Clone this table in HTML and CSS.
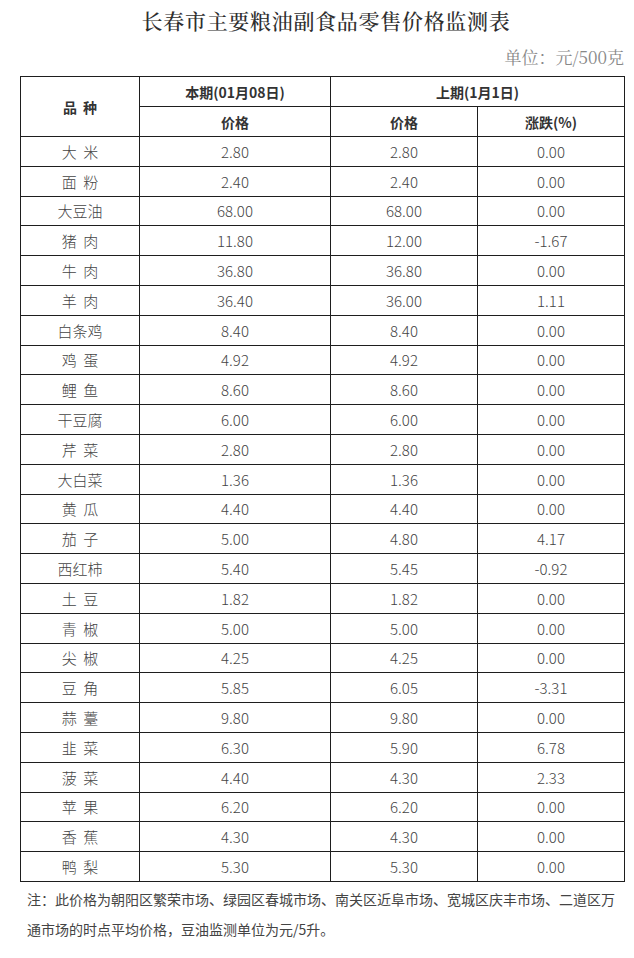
FILE: index.html
```html
<!DOCTYPE html>
<html lang="zh-CN">
<head>
<meta charset="utf-8">
<title>长春市主要粮油副食品零售价格监测表</title>
<link rel="stylesheet" href="styles.css">
</head>
<body>
<div class="page">
  <h1 class="title">长春市主要粮油副食品零售价格监测表</h1>
  <div class="unit">单位：元/500克</div>
  <table class="prices">
    <colgroup>
      <col class="c1"><col class="c2"><col class="c3"><col class="c4">
    </colgroup>
    <thead>
      <tr>
        <th rowspan="2" class="name">品 种</th>
        <th>本期(01月08日)</th>
        <th colspan="2">上期(1月1日)</th>
      </tr>
      <tr>
        <th>价格</th>
        <th>价格</th>
        <th>涨跌(%)</th>
      </tr>
    </thead>
    <tbody>
      <tr><td class="name">大 米</td><td>2.80</td><td>2.80</td><td>0.00</td></tr>
      <tr><td class="name">面 粉</td><td>2.40</td><td>2.40</td><td>0.00</td></tr>
      <tr><td class="name">大豆油</td><td>68.00</td><td>68.00</td><td>0.00</td></tr>
      <tr><td class="name">猪 肉</td><td>11.80</td><td>12.00</td><td>-1.67</td></tr>
      <tr><td class="name">牛 肉</td><td>36.80</td><td>36.80</td><td>0.00</td></tr>
      <tr><td class="name">羊 肉</td><td>36.40</td><td>36.00</td><td>1.11</td></tr>
      <tr><td class="name">白条鸡</td><td>8.40</td><td>8.40</td><td>0.00</td></tr>
      <tr><td class="name">鸡 蛋</td><td>4.92</td><td>4.92</td><td>0.00</td></tr>
      <tr><td class="name">鲤 鱼</td><td>8.60</td><td>8.60</td><td>0.00</td></tr>
      <tr><td class="name">干豆腐</td><td>6.00</td><td>6.00</td><td>0.00</td></tr>
      <tr><td class="name">芹 菜</td><td>2.80</td><td>2.80</td><td>0.00</td></tr>
      <tr><td class="name">大白菜</td><td>1.36</td><td>1.36</td><td>0.00</td></tr>
      <tr><td class="name">黄 瓜</td><td>4.40</td><td>4.40</td><td>0.00</td></tr>
      <tr><td class="name">茄 子</td><td>5.00</td><td>4.80</td><td>4.17</td></tr>
      <tr><td class="name">西红柿</td><td>5.40</td><td>5.45</td><td>-0.92</td></tr>
      <tr><td class="name">土 豆</td><td>1.82</td><td>1.82</td><td>0.00</td></tr>
      <tr><td class="name">青 椒</td><td>5.00</td><td>5.00</td><td>0.00</td></tr>
      <tr><td class="name">尖 椒</td><td>4.25</td><td>4.25</td><td>0.00</td></tr>
      <tr><td class="name">豆 角</td><td>5.85</td><td>6.05</td><td>-3.31</td></tr>
      <tr><td class="name">蒜 薹</td><td>9.80</td><td>9.80</td><td>0.00</td></tr>
      <tr><td class="name">韭 菜</td><td>6.30</td><td>5.90</td><td>6.78</td></tr>
      <tr><td class="name">菠 菜</td><td>4.40</td><td>4.30</td><td>2.33</td></tr>
      <tr><td class="name">苹 果</td><td>6.20</td><td>6.20</td><td>0.00</td></tr>
      <tr><td class="name">香 蕉</td><td>4.30</td><td>4.30</td><td>0.00</td></tr>
      <tr><td class="name">鸭 梨</td><td>5.30</td><td>5.30</td><td>0.00</td></tr>
    </tbody>
  </table>
  <p class="note">注：此价格为朝阳区繁荣市场、绿园区春城市场、南关区近阜市场、宽城区庆丰市场、二道区万通市场的时点平均价格，豆油监测单位为元/5升。</p>
</div>
</body>
</html>
```

FILE: styles.css
```css
html, body {
  margin: 0;
  padding: 0;
  background: #ffffff;
}

body {
  font-family: "Noto Sans CJK SC", "Noto Sans", sans-serif;
  color: #444;
}

.page {
  padding: 0 10px 0 20px;
}

.title {
  margin: 0;
  padding: 6px 0 0 0;
  text-align: center;
  font-family: "Noto Serif CJK SC", "Liberation Serif", "Noto Sans CJK SC", serif;
  font-weight: 500;
  font-size: 21px;
  line-height: 28px;
  letter-spacing: 0.7px;
  color: #2e2e2e;
  position: relative;
  left: 4px;
}

.unit {
  margin-top: 11px;
  text-align: right;
  font-family: "Noto Serif CJK SC", "Liberation Serif", "Noto Sans CJK SC", serif;
  font-size: 17px;
  line-height: 24px;
  color: #888;
}

.prices {
  margin-top: 7px;
  width: 605px;
  border-collapse: collapse;
  table-layout: fixed;
}

.c1 { width: 119px; }
.c2 { width: 191px; }
.c3 { width: 147px; }
.c4 { width: 147px; }

.prices th,
.prices td {
  border: 1px solid #1e1e1e;
  padding: 0;
  text-align: center;
  vertical-align: middle;
}

.prices th {
  height: 29px;
  font-size: 14px;
  font-weight: bold;
  color: #333;
}

.prices td {
  height: 28.8px;
  font-size: 15px;
  font-weight: 300;
  color: #444;
}

.prices .name {
  word-spacing: 3px;
}

.note {
  margin: 2px 0 0 0;
  padding: 0 0 0 7px;
  width: 595px;
  font-size: 14px;
  line-height: 30px;
  color: #444;
}
```
